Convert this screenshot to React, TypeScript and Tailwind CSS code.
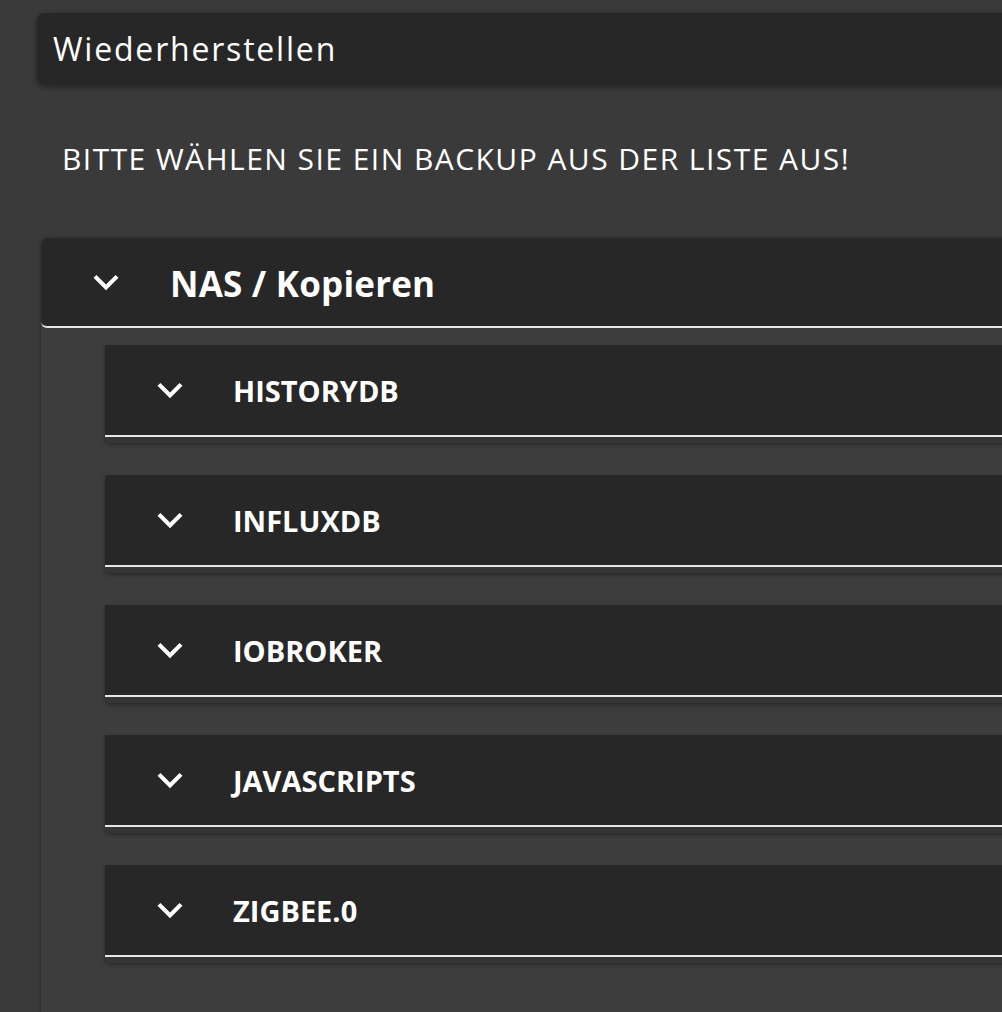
import { useState } from 'react';

const font = { fontFamily: '"Open Sans", "Noto Sans", sans-serif' };

const Chevron = ({ className = '' }: { className?: string }) => (
  <svg viewBox="0 0 24 24" className={className} fill="currentColor">
    <path d="M16.59 8.59 12 13.17 7.41 8.59 6 10l6 6 6-6z" />
  </svg>
);

const items = ['HISTORYDB', 'INFLUXDB', 'IOBROKER', 'JAVASCRIPTS', 'ZIGBEE.0'];

const SubItem = ({ label }: { label: string }) => (
  <div className="shadow-[0_2px_4px_rgba(0,0,0,0.35)] rounded-b-md">
    <div className="h-[92px] bg-[#272727] border-b-2 border-[#e6e6e6] flex items-center pl-[40px]">
      <Chevron className="w-[50px] h-[50px] text-white" />
      <span className="ml-[38px] mt-[2px] text-[29px] font-bold text-white">{label}</span>
    </div>
    <div className="h-[6px] bg-[#363636] rounded-b-md" />
  </div>
);

export default function App() {
  const [open] = useState(true);
  return (
    <div className="min-h-screen bg-[#3a3a3a] overflow-hidden pl-[37px] pt-[13px]" style={font}>
      <div className="w-[1040px] h-[72px] bg-[#272727] rounded-lg shadow-[0_2px_6px_rgba(0,0,0,0.4)] flex items-center pl-[16px]">
        <h1 className="text-[32px] text-white font-medium tracking-[1.8px]">Wiederherstellen</h1>
      </div>

      <p className="mt-[54px] ml-[25px] text-[30px] text-white uppercase leading-[40px] tracking-[1.45px]">
        Bitte wählen Sie ein Backup aus der Liste aus!
      </p>

      <div className="mt-[59px] ml-[4px] w-[1040px] rounded-t-lg bg-[#3d3d3d] shadow-[0_0_4px_rgba(0,0,0,0.35)] min-h-[800px]">
        <div className="h-[90px] bg-[#272727] rounded-t-lg rounded-bl-[6px] border-b-2 border-[#e6e6e6] flex items-center pl-[40px]">
          <Chevron className="w-[50px] h-[50px] text-white" />
          <span className="ml-[39px] mt-[5px] text-[35px] font-bold text-white tracking-[0.2px]">NAS / Kopieren</span>
        </div>
        {open && (
          <div className="flex flex-col gap-[32px] pl-[64px] pt-[17px]">
            {items.map((it) => (
              <SubItem key={it} label={it} />
            ))}
          </div>
        )}
      </div>
    </div>
  );
}
